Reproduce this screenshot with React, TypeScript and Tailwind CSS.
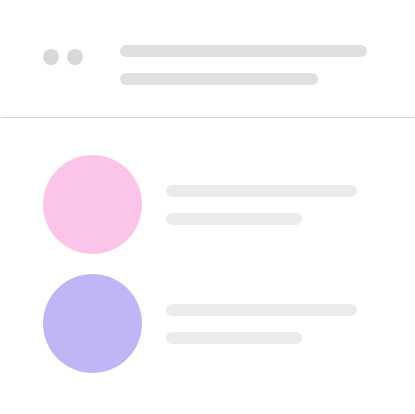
import React from 'react';

const rows = [
  { id: 'pink', color: 'bg-[#fbc5ea]' },
  { id: 'violet', color: 'bg-[#c0b5f5]' },
];

const App = () => {
  return (
    <main className="min-h-screen bg-white">
      {/* Header: two dots and a pair of title lines */}
      <header className="ml-px flex border-b border-[#d4d4d4] pt-[45px] pr-12 pb-8 pl-[42px]">
        <div className="mt-1 flex w-[77px] shrink-0 gap-2">
          <span className="size-4 rounded-full bg-[#d8d8d8]" />
          <span className="size-4 rounded-full bg-[#d8d8d8]" />
        </div>
        <div className="flex flex-1 flex-col gap-4">
          <div className="h-3 rounded-full bg-[#dfe0df]" />
          <div className="h-3 w-4/5 rounded-full bg-[#dfe0df]" />
        </div>
      </header>

      {/* List of placeholder rows */}
      <ul className="flex flex-col gap-5 pt-[37px] pr-[58px] pb-10 pl-[43px]">
        {rows.map((row) => (
          <li key={row.id} className="flex items-center gap-6">
            <span className={`size-[99px] shrink-0 rounded-full ${row.color}`} />
            <div className="flex flex-1 flex-col gap-4">
              <div className="h-3 rounded-full bg-[#ebebeb]" />
              <div className="h-3 w-[71%] rounded-full bg-[#ebebeb]" />
            </div>
          </li>
        ))}
      </ul>
    </main>
  );
};

export default App;
